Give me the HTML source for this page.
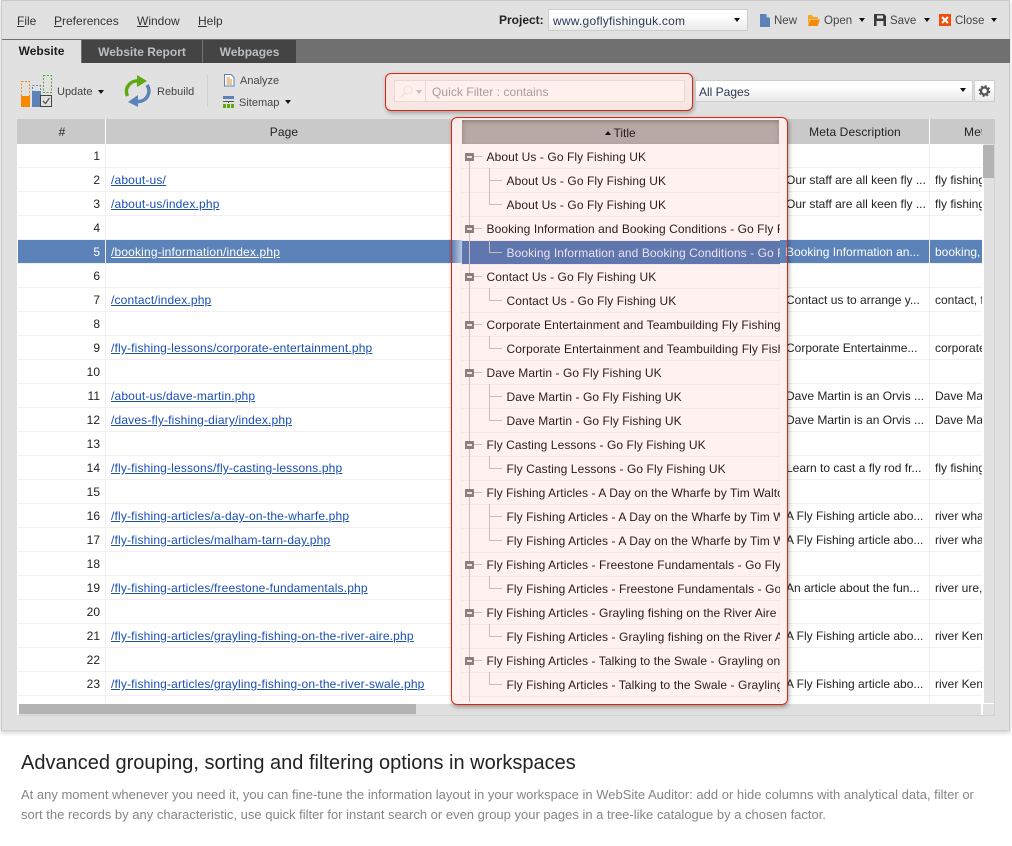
<!DOCTYPE html>
<html><head><meta charset="utf-8"><style>
html,body{margin:0;padding:0;width:1012px;height:846px;overflow:hidden;background:#fff;font-family:"Liberation Sans",sans-serif;font-size:12px;color:#222}
.a{position:absolute;white-space:nowrap}
#win{position:absolute;left:1px;top:0;width:1009px;height:731px;background:#e1e1e1;border:1px solid #c9c9c9;border-bottom:1px solid #cfcfcf;box-sizing:border-box;box-shadow:0 2px 4px rgba(0,0,0,.18)}
.m{top:14px;color:#333}
.m u{text-decoration:underline}
.tb{top:15px;color:#444;font-size:11.5px}
.sm{font-size:11px}
.arr{position:absolute;width:0;height:0;border-left:3px solid transparent;border-right:3px solid transparent;border-top:4px solid #111}
.tab{position:absolute;top:41px;height:22px;background:#444;color:#b9bfc4;font-weight:bold;text-align:center;line-height:24px}
.combo{position:absolute;box-sizing:border-box;border:1px solid #cdcdcd;background:linear-gradient(#fff 30%,#e9e9e9)}
.th{position:absolute;top:119px;height:25px;background:#c9c9c9;text-align:center;line-height:27px;color:#222;overflow:hidden;letter-spacing:.1px}
#rows{position:absolute;left:18px;top:144px;width:964px;height:559px;background:#fff;overflow:hidden}
.r{position:relative;height:23px;border-bottom:1px solid #f0f0f0;line-height:25px;color:#222;white-space:nowrap}
.r b{font-weight:normal;position:absolute;right:882px;top:0}
.r a{position:absolute;left:93px;top:0;color:#1a4fb0;text-decoration:underline;letter-spacing:.165px}
.r i{font-style:normal;position:absolute;left:768px;top:0;width:143px;overflow:hidden}
.r s{text-decoration:none;position:absolute;left:917px;top:0;width:47px;overflow:hidden}
.sel{background:#5b82b9;color:#fff}
.sel a,.sel b{color:#fff}
.vl{position:absolute;top:144px;width:1px;height:559px;background:#f0f0f0}
#ov{position:absolute;left:450.5px;top:116.5px;width:337.5px;height:588.5px;box-sizing:border-box;border:1.5px solid #d5280e;border-radius:6px;background:rgba(255,240,238,.92);box-shadow:1px 2px 4px rgba(0,0,0,.35);overflow:hidden}
#tt{position:absolute;left:10px;top:26px;width:318px;height:560px;overflow:hidden;padding-top:1px;box-sizing:border-box}
.g,.c{height:24px;line-height:24px;color:#2a1c1c;white-space:nowrap;box-sizing:border-box;border-bottom:1px solid #f6e6e4;letter-spacing:.08px}
.g{padding-left:25px}
.c{padding-left:45px}
.ss{background:#5f76ae;color:#e9e4ec}
.bx{position:absolute;left:14px;width:9px;height:8px;background:#8d7f7c}
.bx:after{content:"";position:absolute;left:2px;top:3px;width:5px;height:2px;background:#e8e0df}
.hl{position:absolute;height:1px;background:#c9bcb9}
.v{position:absolute;width:1px;background:#c9bcb9}
</style></head><body>
<div id="win"></div>

<div class="a m" style="left:17px"><u>F</u>ile</div>
<div class="a m" style="left:54px"><u>P</u>references</div>
<div class="a m" style="left:137px"><u>W</u>indow</div>
<div class="a m" style="left:198px"><u>H</u>elp</div>

<div class="a" style="left:499px;top:13px;font-weight:bold;color:#222">Project:</div>
<div class="combo" style="left:548px;top:9px;width:200px;height:22px;padding:4px 4px;color:#2b3a55;letter-spacing:.22px">www.goflyfishinguk.com</div>
<div class="arr" style="left:734px;top:18px"></div>

<svg class="a" style="left:760px;top:14px" width="10" height="13"><path d="M0 0H6L10 4V13H0Z" fill="#5b82b9"/><path d="M6.500 0L10 3.500H6.500Z" fill="#c9d6e8"/></svg>
<div class="a tb" style="left:774px">New</div>
<svg class="a" style="left:807px;top:14px" width="13" height="12"><path d="M1 1H5L6 3H11V5H3L1 11Z" fill="#f5a623"/><path d="M3.500 5.500H13L10.500 12H1Z" fill="#f58a07"/></svg>
<div class="a tb" style="left:824px">Open</div>
<div class="arr" style="left:859px;top:18px"></div>
<svg class="a" style="left:874px;top:14px" width="12" height="12"><path d="M0 0H10L12 2V12H0Z" fill="#3a3a3a"/><rect x="3" y="1.500" width="6" height="3" fill="#e1e1e1"/><rect x="2.500" y="7" width="7" height="5" fill="#e1e1e1"/></svg>
<div class="a tb" style="left:890px">Save</div>
<div class="arr" style="left:924px;top:18px"></div>
<svg class="a" style="left:939px;top:14px" width="12" height="12"><rect width="12" height="12" fill="#f04e0b"/><path d="M3 3L9 9M9 3L3 9" stroke="#fff" stroke-width="2"/></svg>
<div class="a tb" style="left:955px">Close</div>
<div class="arr" style="left:991px;top:18px"></div>

<div class="a" style="left:2px;top:39px;width:1008px;height:24px;background:#707070"></div>
<div class="a" style="left:2px;top:40px;width:79px;height:24px;background:#e1e1e1;text-align:center;font-weight:bold;color:#1c1c1c;line-height:22px">Website</div>
<div class="tab" style="left:82px;width:120px;top:40px;height:23px">Website Report</div>
<div class="tab" style="left:203px;width:93px;top:40px;height:23px">Webpages</div>

<svg class="a" style="left:20px;top:74px" width="34" height="34">
<rect x="1.500" y="7.500" width="8" height="15" fill="none" stroke="#e8912b" stroke-dasharray="2 1.500"/>
<rect x="1" y="22" width="9" height="11" fill="#f78a00"/>
<rect x="12.500" y="11.500" width="8" height="6" fill="none" stroke="#5b82b9" stroke-dasharray="2 1.500"/>
<rect x="12" y="17" width="9" height="16" fill="#5b82b9"/>
<rect x="23.500" y="1.500" width="8" height="17" fill="none" stroke="#5fa82a" stroke-dasharray="2 1.500"/>
<rect x="20.500" y="21.500" width="11" height="11" fill="#e1e1e1" stroke="#444"/>
<path d="M23 27L25.500 29.500L29.500 24" fill="none" stroke="#555" stroke-width="1.300"/>
</svg>
<div class="a tb sm" style="left:57px;top:86px">Update</div>
<div class="arr" style="left:98px;top:90px"></div>

<svg class="a" style="left:124px;top:74px" width="28" height="34">
<path d="M3.500 22A10.500 10.500 0 0 1 14 7" fill="none" stroke="#5fa80f" stroke-width="3.500"/>
<path d="M13 1L23 7L13 13Z" fill="#5fa80f"/>
<path d="M23 11A10.500 10.500 0 0 1 14 27.500" fill="none" stroke="#5b82b9" stroke-width="3.500"/>
<path d="M14 21L4 28L14 33Z" fill="#5b82b9"/>
</svg>
<div class="a tb sm" style="left:157px;top:86px">Rebuild</div>
<div class="a" style="left:207px;top:75px;width:1px;height:32px;background:#cfcfcf"></div>

<svg class="a" style="left:224px;top:74px" width="11" height="13"><path d="M.5 .5H7L10 3.500V12H.5Z" fill="#fff" stroke="#5b82b9"/><path d="M2.500 4H6M2.500 6H8" stroke="#f08a1d"/><path d="M2.500 8H8M2.500 10H8" stroke="#d98a3a"/></svg>
<div class="a tb sm" style="left:240px;top:75px">Analyze</div>
<svg class="a" style="left:223px;top:96px" width="12" height="12"><rect width="11" height="3" fill="#5b82b9"/><path d="M0 5.500H11M5.500 5V7" stroke="#555" stroke-width="1"/><rect y="8" width="3" height="4" fill="#5fa80f"/><rect x="4" y="8" width="3" height="4" fill="#5fa80f"/><rect x="8" y="8" width="3" height="4" fill="#5fa80f"/></svg>
<div class="a tb sm" style="left:239px;top:97px">Sitemap</div>
<div class="arr" style="left:285px;top:100px"></div>

<div class="a" style="left:385px;top:73px;width:308px;height:38px;box-sizing:border-box;border:1.5px solid #d5280e;border-radius:6px;background:#f8e6e3;box-shadow:1px 2px 4px rgba(0,0,0,.3)"></div>
<div class="a" style="left:394px;top:80px;width:291px;height:22px;box-sizing:border-box;border:1px solid #e6d8d6;background:#fff0ee"></div>
<div class="a" style="left:425px;top:81px;width:1px;height:20px;background:#e6d8d6"></div>
<svg class="a" style="left:400px;top:85px" width="14" height="13"><circle cx="8" cy="5" r="4" fill="none" stroke="#efdedc"/><path d="M5 8L1 12" stroke="#efdedc" stroke-width="1.500"/></svg>
<div class="arr" style="left:416px;top:90px;border-top-color:#c9b8b6"></div>
<div class="a" style="left:432px;top:85px;color:#a99b99;letter-spacing:.05px">Quick Filter : contains</div>

<div class="combo" style="left:695px;top:80px;width:278px;height:22px;padding:4px 3px;color:#2b3a55">All Pages</div>
<div class="arr" style="left:960px;top:88px"></div>
<div class="combo" style="left:974px;top:80px;width:21px;height:22px"></div>
<svg class="a" style="left:978px;top:85px" width="13" height="12"><circle cx="6.500" cy="6" r="3.500" fill="none" stroke="#555" stroke-width="2.200"/><circle cx="6.500" cy="6" r="5" fill="none" stroke="#555" stroke-width="1.800" stroke-dasharray="2 1.930"/></svg>

<div class="a" style="left:17px;top:119px;width:978px;height:597px;box-sizing:border-box;border:1px solid #d2d2d2;border-left:1px solid #fff;border-top:0;background:#fff"></div>
<div class="th" style="left:17px;width:90px">#</div>
<div class="a" style="left:17px;top:119px;width:978px;height:25px;background:#c9c9c9"></div>
<div class="th" style="left:17px;width:90px">#</div>
<div class="th" style="left:106px;width:356px">Page</div>
<div class="th" style="left:462px;width:318px"></div>
<div class="th" style="left:781px;width:148px">Meta Description</div>
<div class="th" style="left:930px;width:52px;text-align:left;padding-left:34px;box-sizing:border-box">Meta Keywords</div>

<div id="rows">
<div class="r"><b>1</b></div>
<div class="r"><b>2</b><a>/about-us/</a><i>Our staff are all keen fly ...</i><s>fly fishing</s></div>
<div class="r"><b>3</b><a>/about-us/index.php</a><i>Our staff are all keen fly ...</i><s>fly fishing</s></div>
<div class="r"><b>4</b></div>
<div class="r sel"><b>5</b><a>/booking-information/index.php</a><i>Booking Information an...</i><s>booking,</s></div>
<div class="r"><b>6</b></div>
<div class="r"><b>7</b><a>/contact/index.php</a><i>Contact us to arrange y...</i><s>contact, f</s></div>
<div class="r"><b>8</b></div>
<div class="r"><b>9</b><a>/fly-fishing-lessons/corporate-entertainment.php</a><i>Corporate Entertainme...</i><s>corporate</s></div>
<div class="r"><b>10</b></div>
<div class="r"><b>11</b><a>/about-us/dave-martin.php</a><i>Dave Martin is an Orvis ...</i><s>Dave Mar</s></div>
<div class="r"><b>12</b><a>/daves-fly-fishing-diary/index.php</a><i>Dave Martin is an Orvis ...</i><s>Dave Mar</s></div>
<div class="r"><b>13</b></div>
<div class="r"><b>14</b><a>/fly-fishing-lessons/fly-casting-lessons.php</a><i>Learn to cast a fly rod fr...</i><s>fly fishing</s></div>
<div class="r"><b>15</b></div>
<div class="r"><b>16</b><a>/fly-fishing-articles/a-day-on-the-wharfe.php</a><i>A Fly Fishing article abo...</i><s>river wha</s></div>
<div class="r"><b>17</b><a>/fly-fishing-articles/malham-tarn-day.php</a><i>A Fly Fishing article abo...</i><s>river wha</s></div>
<div class="r"><b>18</b></div>
<div class="r"><b>19</b><a>/fly-fishing-articles/freestone-fundamentals.php</a><i>An article about the fun...</i><s>river ure,</s></div>
<div class="r"><b>20</b></div>
<div class="r"><b>21</b><a>/fly-fishing-articles/grayling-fishing-on-the-river-aire.php</a><i>A Fly Fishing article abo...</i><s>river Ken</s></div>
<div class="r"><b>22</b></div>
<div class="r"><b>23</b><a>/fly-fishing-articles/grayling-fishing-on-the-river-swale.php</a><i>A Fly Fishing article abo...</i><s>river Ken</s></div>
<div class="r"></div>
</div>
<div class="vl" style="left:105px"></div>
<div class="vl" style="left:929px"></div>
<div class="a" style="left:105px;top:119px;width:1px;height:25px;background:#fff"></div>
<div class="a" style="left:929px;top:119px;width:1px;height:25px;background:#fff"></div>

<div class="a" style="left:983px;top:144px;width:11px;height:559px;background:#e1e1e1;border-left:1px solid #fff;box-sizing:border-box"></div>
<div class="a" style="left:983px;top:145px;width:11px;height:33px;background:#b3b3b3"></div>
<div class="a" style="left:19px;top:704px;width:962px;height:11px;background:#dfdfdf"></div>
<div class="a" style="left:19px;top:704px;width:397px;height:10px;background:#b3b3b3"></div>
<div class="a" style="left:982px;top:703px;width:12px;height:12px;background:#e1e1e1;border-left:1px solid #fff;border-top:1px solid #fff;box-sizing:border-box"></div>

<div id="ov">
<div class="a" style="left:10px;top:2px;width:318px;height:24px;background:#b9a9a6;box-shadow:inset 0 4px 4px -2px rgba(120,100,100,.5),inset 4px 0 4px -2px rgba(120,100,100,.25),inset -4px 0 4px -2px rgba(120,100,100,.25)"></div>
<div class="a" style="left:9px;top:2px;width:1px;height:585px;background:#f7eeec"></div>
<div class="a" style="left:327px;top:2px;width:1px;height:585px;background:#f7eeec"></div>
<div class="a" style="left:0;top:122px;width:10px;height:23px;background:linear-gradient(90deg,#5f80b8,#c0cbe0)"></div>
<div class="a" style="left:328px;top:122px;width:8px;height:23px;background:#5b82b9;color:#fff;line-height:25px;overflow:hidden"><span style="position:absolute;left:6px;top:0">Booking</span></div>
<div class="a" style="left:153px;top:8px;color:#2a1c1c;line-height:15px"><span style="display:inline-block;width:0;height:0;border-left:3px solid transparent;border-right:3px solid transparent;border-bottom:4px solid #111;vertical-align:2px;margin-right:3px"></span>Title</div>
<div id="tt">
<div class="g">About Us - Go Fly Fishing UK</div>
<div class="c">About Us - Go Fly Fishing UK</div>
<div class="c">About Us - Go Fly Fishing UK</div>
<div class="g">Booking Information and Booking Conditions - Go Fly Fishing UK</div>
<div class="c ss">Booking Information and Booking Conditions - Go Fly Fishing UK</div>
<div class="g">Contact Us - Go Fly Fishing UK</div>
<div class="c">Contact Us - Go Fly Fishing UK</div>
<div class="g">Corporate Entertainment and Teambuilding Fly Fishing Days</div>
<div class="c">Corporate Entertainment and Teambuilding Fly Fishing Days</div>
<div class="g">Dave Martin - Go Fly Fishing UK</div>
<div class="c">Dave Martin - Go Fly Fishing UK</div>
<div class="c">Dave Martin - Go Fly Fishing UK</div>
<div class="g">Fly Casting Lessons - Go Fly Fishing UK</div>
<div class="c">Fly Casting Lessons - Go Fly Fishing UK</div>
<div class="g">Fly Fishing Articles - A Day on the Wharfe by Tim Walton</div>
<div class="c">Fly Fishing Articles - A Day on the Wharfe by Tim Walton</div>
<div class="c">Fly Fishing Articles - A Day on the Wharfe by Tim Walton</div>
<div class="g">Fly Fishing Articles - Freestone Fundamentals - Go Fly Fishing</div>
<div class="c">Fly Fishing Articles - Freestone Fundamentals - Go Fly Fishing</div>
<div class="g">Fly Fishing Articles - Grayling fishing on the River Aire</div>
<div class="c">Fly Fishing Articles - Grayling fishing on the River Aire</div>
<div class="g">Fly Fishing Articles - Talking to the Swale - Grayling on the Swale</div>
<div class="c">Fly Fishing Articles - Talking to the Swale - Grayling on the Swale</div>
</div>
</div>

<div id="tree" class="a" style="left:451px;top:116px;width:337px;height:586px;overflow:hidden">
<div class="v" style="left:18px;top:40px;height:548px"></div>
<div class="bx" style="top:37px"></div><div class="hl" style="left:23px;top:40px;width:8px"></div>
<div class="v" style="left:38px;top:52px;height:37px"></div><div class="hl" style="left:38px;top:64px;width:13px"></div><div class="hl" style="left:38px;top:88px;width:13px"></div>
<div class="bx" style="top:109px"></div><div class="hl" style="left:23px;top:112px;width:8px"></div>
<div class="v" style="left:38px;top:124px;height:13px"></div><div class="hl" style="left:38px;top:136px;width:13px"></div>
<div class="bx" style="top:157px"></div><div class="hl" style="left:23px;top:160px;width:8px"></div>
<div class="v" style="left:38px;top:172px;height:13px"></div><div class="hl" style="left:38px;top:184px;width:13px"></div>
<div class="bx" style="top:205px"></div><div class="hl" style="left:23px;top:208px;width:8px"></div>
<div class="v" style="left:38px;top:220px;height:13px"></div><div class="hl" style="left:38px;top:232px;width:13px"></div>
<div class="bx" style="top:253px"></div><div class="hl" style="left:23px;top:256px;width:8px"></div>
<div class="v" style="left:38px;top:268px;height:37px"></div><div class="hl" style="left:38px;top:280px;width:13px"></div><div class="hl" style="left:38px;top:304px;width:13px"></div>
<div class="bx" style="top:325px"></div><div class="hl" style="left:23px;top:328px;width:8px"></div>
<div class="v" style="left:38px;top:340px;height:13px"></div><div class="hl" style="left:38px;top:352px;width:13px"></div>
<div class="bx" style="top:373px"></div><div class="hl" style="left:23px;top:376px;width:8px"></div>
<div class="v" style="left:38px;top:388px;height:37px"></div><div class="hl" style="left:38px;top:400px;width:13px"></div><div class="hl" style="left:38px;top:424px;width:13px"></div>
<div class="bx" style="top:445px"></div><div class="hl" style="left:23px;top:448px;width:8px"></div>
<div class="v" style="left:38px;top:460px;height:13px"></div><div class="hl" style="left:38px;top:472px;width:13px"></div>
<div class="bx" style="top:493px"></div><div class="hl" style="left:23px;top:496px;width:8px"></div>
<div class="v" style="left:38px;top:508px;height:13px"></div><div class="hl" style="left:38px;top:520px;width:13px"></div>
<div class="bx" style="top:541px"></div><div class="hl" style="left:23px;top:544px;width:8px"></div>
<div class="v" style="left:38px;top:556px;height:13px"></div><div class="hl" style="left:38px;top:568px;width:13px"></div>
</div>

<div class="a" style="left:21px;top:751px;font-size:20px;line-height:24px;color:#222">Advanced grouping, sorting and filtering options in workspaces</div>
<div class="a" style="left:21px;top:785px;font-size:13px;line-height:20px;color:#858585">At any moment whenever you need it, you can fine-tune the information layout in your workspace in WebSite Auditor: add or hide columns with analytical data, filter or<br>sort the records by any characteristic, use quick filter for instant search or even group your pages in a tree-like catalogue by a chosen factor.</div>
</body></html>
